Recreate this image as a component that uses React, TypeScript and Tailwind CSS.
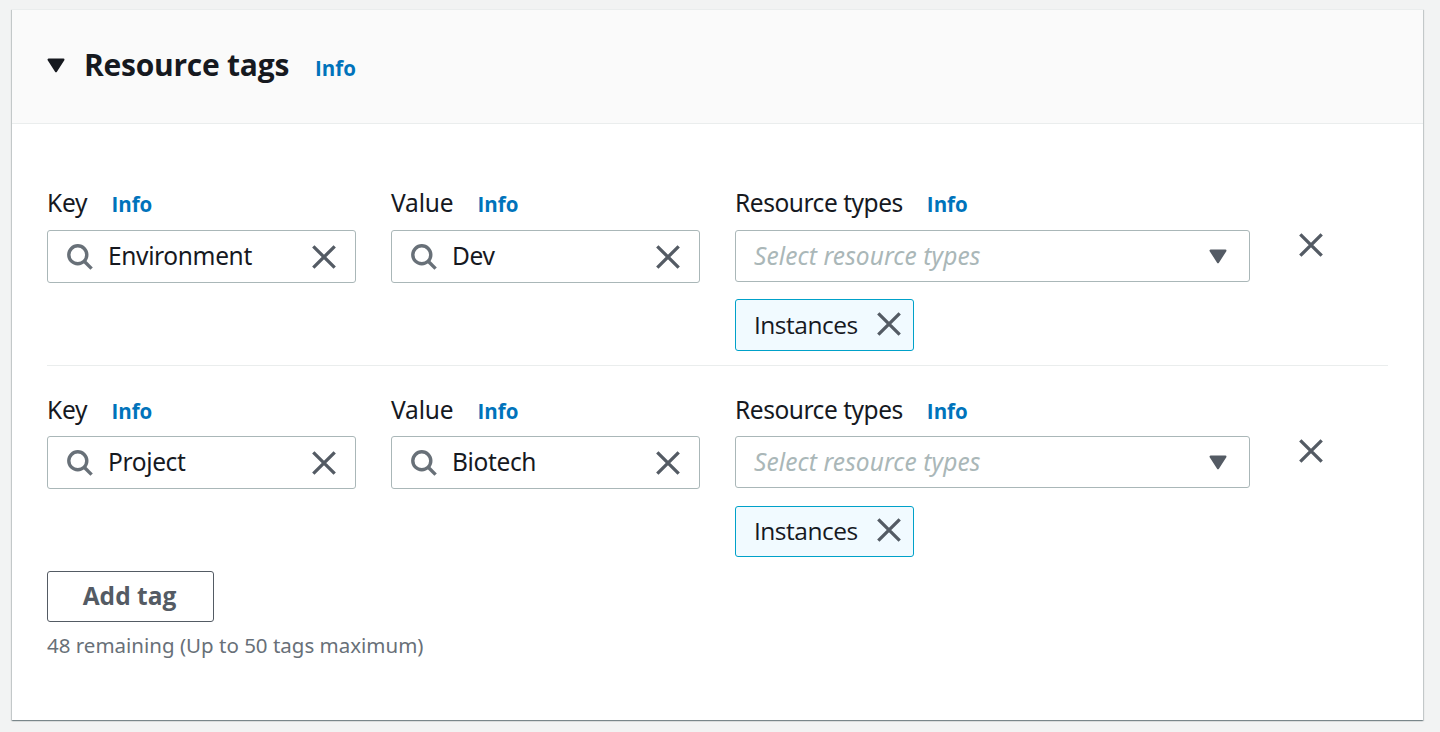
type Tag = { key: string; value: string };
type Spacing = { label: string; token: string; tokenText: string; remove: string };

function CloseIcon({ className = "" }: { className?: string }) {
  return (
    <svg className={`block shrink-0 ${className}`} width="24" height="24" viewBox="0 0 24 24" fill="none" stroke="#545b64" strokeWidth="3.3">
      <path d="M1.3 1.3 22.7 22.7M22.7 1.3 1.3 22.7" />
    </svg>
  );
}

function SearchIcon() {
  return (
    <svg className="block shrink-0" width="26" height="26" viewBox="0 0 26 26" fill="none" stroke="#687078" strokeWidth="3.4">
      <circle cx="10.8" cy="10.8" r="9" />
      <path d="M17.2 17.2 24.6 24.6" />
    </svg>
  );
}

function CaretIcon({ color }: { color: string }) {
  return (
    <svg className="block shrink-0" width="18" height="15" viewBox="0 0 18 15">
      <path d="M1.6 1.6H16.4L9 13.2Z" fill={color} stroke={color} strokeWidth="2.2" strokeLinejoin="round" />
    </svg>
  );
}

function Info({ className = "" }: { className?: string }) {
  return (
    <a href="#" className={`font-['Open_Sans',sans-serif] text-[20.5px] font-bold leading-7 text-[#0073bb] ${className}`}>
      Info
    </a>
  );
}

function Label({ text, tracking }: { text: string; tracking: string }) {
  return (
    <div className="flex items-baseline gap-6">
      <span className={`leading-7 ${tracking}`}>{text}</span>
      <Info />
    </div>
  );
}

function SearchField({ value }: { value: string }) {
  return (
    <div className="flex h-[53px] items-center rounded-[3px] border border-[#aab7b8] bg-white pl-[19px] pr-[19px]">
      <SearchIcon />
      <span className="mb-0.5 ml-[15px] flex-1 leading-7 tracking-[-0.36px]">{value}</span>
      <CloseIcon />
    </div>
  );
}

function TagRow({ tag, spacing }: { tag: Tag; spacing: Spacing }) {
  return (
    <div className="flex">
      <div className={`flex w-[309px] flex-col ${spacing.label}`}>
        <Label text="Key" tracking="tracking-[-0.2px]" />
        <SearchField value={tag.key} />
      </div>
      <div className={`ml-[35px] flex w-[309px] flex-col ${spacing.label}`}>
        <Label text="Value" tracking="tracking-[-0.15px]" />
        <SearchField value={tag.value} />
      </div>
      <div className="ml-[35px] w-[515px]">
        <div className={`flex flex-col ${spacing.label}`}>
          <Label text="Resource types" tracking="tracking-[-0.46px]" />
          <div className="flex h-[52px] items-center justify-between rounded-[3px] border border-[#aab7b8] bg-white pl-[18px] pr-[22px]">
            <span className="italic leading-7 tracking-[0.1px] text-[#aab7b8]">Select resource types</span>
            <CaretIcon color="#545b64" />
          </div>
        </div>
        <div className={`flex w-[179px] items-center justify-between rounded-[3px] border border-[#00a1c9] bg-[#f1faff] pl-[18px] pr-3 ${spacing.token}`}>
          <span className={`font-['Open_Sans',sans-serif] font-[450] leading-7 tracking-[-0.5px] ${spacing.tokenText}`}>Instances</span>
          <CloseIcon className="mb-[3px]" />
        </div>
      </div>
      <button className={`ml-[49px] h-6 ${spacing.remove}`} aria-label="Remove tag">
        <CloseIcon />
      </button>
    </div>
  );
}

export default function App() {
  return (
    <div className="h-[732px] bg-[#f2f3f3] pl-3 pr-[17px] pt-[9px] font-['Noto_Sans','Open_Sans',sans-serif] text-[24.5px] text-[#16191f]">
      <section className="h-[711px] border-t border-[#eaeded] bg-white shadow-[0_1px_1px_0_rgba(0,28,36,0.3),1px_1px_1px_0_rgba(0,28,36,0.15),-1px_1px_1px_0_rgba(0,28,36,0.15)]">
        <header className="flex h-[114px] items-center border-b border-[#eaeded] bg-[#fafafa] pb-0.5 pl-[35px]">
          <CaretIcon color="#16191f" />
          <h2 className="mb-0.5 ml-[19px] font-['Open_Sans',sans-serif] text-[30px] font-bold leading-10 tracking-[-0.25px]">Resource tags</h2>
          <Info className="ml-[26px] mt-1" />
        </header>
        <div className="px-[35px] pt-[65px]">
          <div className="border-b border-[#eaeded] pb-3.5">
            <TagRow
              tag={{ key: "Environment", value: "Dev" }}
              spacing={{ label: "gap-3", token: "mt-[17px] h-[52px]", tokenText: "mb-0", remove: "mt-[44px]" }}
            />
          </div>
          <div className="pt-[30px]">
            <TagRow
              tag={{ key: "Project", value: "Biotech" }}
              spacing={{ label: "gap-[11px]", token: "mt-[18px] h-[51px]", tokenText: "mb-0.5", remove: "mt-[43px]" }}
            />
          </div>
          <button className="mt-3.5 flex h-[51px] w-[167px] items-center justify-center rounded-[3px] border border-[#545b64] pb-0.5 pr-0.5 font-['Open_Sans',sans-serif] font-bold leading-7 text-[#545b64]">
            Add tag
          </button>
          <p className="mt-[9px] text-[20.5px] leading-7 text-[#687078]">48 remaining (Up to 50 tags maximum)</p>
        </div>
      </section>
    </div>
  );
}
